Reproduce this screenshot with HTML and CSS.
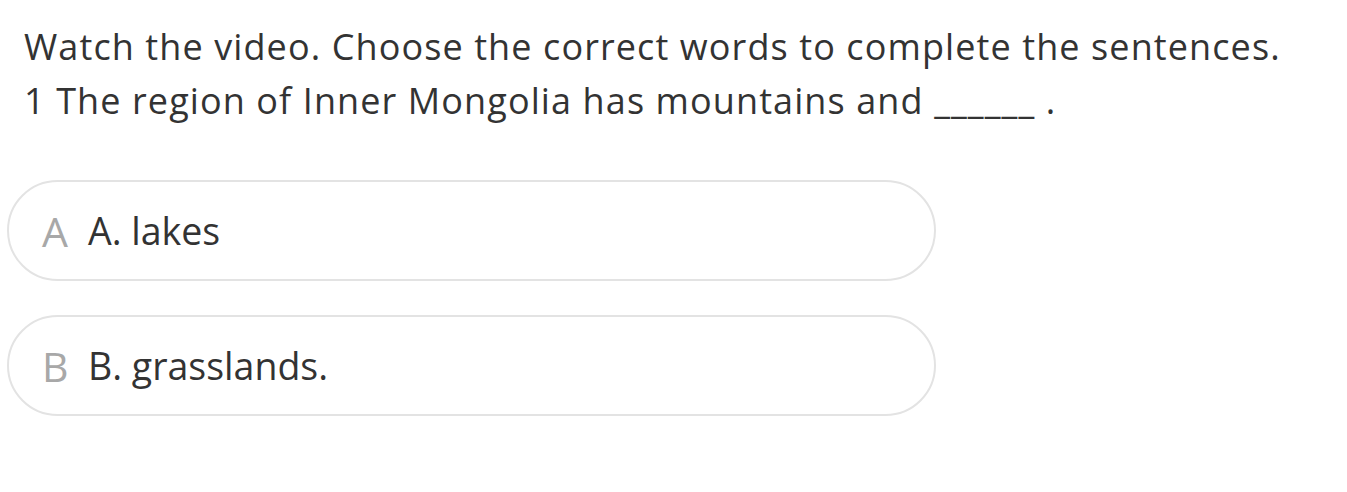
FILE: index.html
```html
<!DOCTYPE html>
<html lang="en">
<head>
<meta charset="utf-8">
<link rel="stylesheet" href="styles.css">
</head>
<body>
<div class="quiz">
  <div class="prompt">
    <p class="line">Watch the video. Choose the correct words to complete the sentences.</p>
    <p class="line">1 The region of Inner Mongolia has mountains and <span class="blank">______</span> .</p>
  </div>
  <ul class="options">
    <li class="option"><span class="key">A</span><span class="label">A. lakes</span></li>
    <li class="option"><span class="key">B</span><span class="label">B. grasslands.</span></li>
  </ul>
</div>
</body>
</html>
```

FILE: styles.css
```css
html, body {
  margin: 0;
  padding: 0;
  background: #ffffff;
}
body {
  font-family: "Open Sans", "Noto Sans", sans-serif;
  color: #333333;
}
.quiz {
  padding: 20px 0 0 7px;
}
.prompt {
  padding-left: 17px;
}
.line {
  margin: 0;
  font-size: 36px;
  letter-spacing: 1.1px;
  line-height: 54px;
}
.options {
  list-style: none;
  margin: 52px 0 0 0;
  padding: 0;
  display: flex;
  flex-direction: column;
  gap: 34px;
}
.option {
  width: 929px;
  height: 101px;
  box-sizing: border-box;
  border: 2px solid #e3e3e3;
  border-radius: 51px;
  display: flex;
  align-items: center;
  padding-left: 33px;
  font-size: 37.5px;
}
.key {
  color: #a8a8a8;
  width: 46px;
  font-size: 41px;
}
.label {
  color: #333333;
}
```
